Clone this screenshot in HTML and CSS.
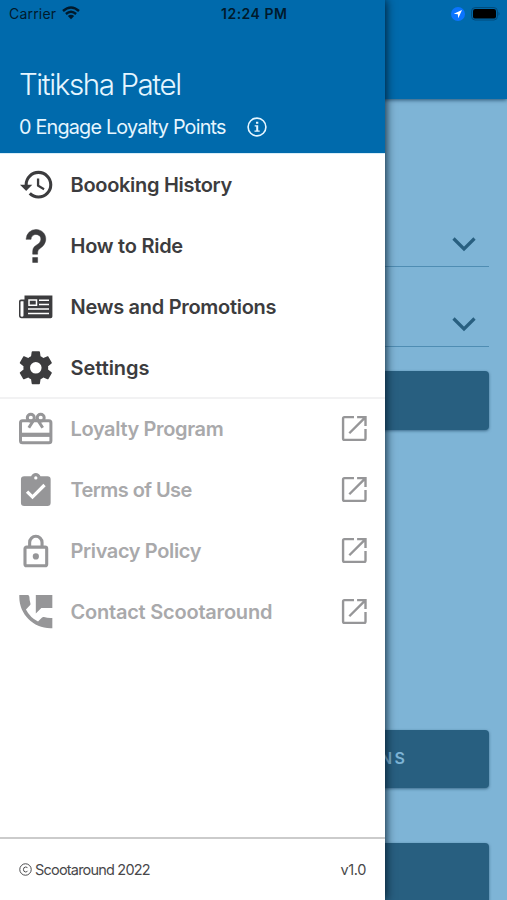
FILE: index.html
```html
<!DOCTYPE html>
<html lang="en">
<head>
<meta charset="utf-8">
<title>Scootaround</title>
<link rel="stylesheet" href="styles.css">
</head>
<body>
<svg width="0" height="0" class="defs">
  <symbol id="open" viewBox="0 0 26 26"><path d="M12.500 2H3.300Q2 2 2 3.300V22.700Q2 24 3.300 24H22.300Q23.600 24 23.600 22.700V13.500M15.500 2H23.600V10.500M23.600 2L8 17.600" fill="none" stroke="currentColor" stroke-width="2.300"/></symbol>
</svg>
<div class="screen">
  <main class="page">
    <div class="topbar"></div>
    <div class="select first"><svg class="chevron" viewBox="0 0 24 15"><path d="M1.500 1.500L12 12L22.500 1.500"/></svg></div>
    <div class="select"><svg class="chevron" viewBox="0 0 24 15"><path d="M1.500 1.500L12 12L22.500 1.500"/></svg></div>
    <div class="button search"></div>
    <div class="button options">NS</div>
    <div class="button last"></div>
  </main>

  <aside class="drawer">
    <header class="profile">
      <div class="name">Titiksha Patel</div>
      <div class="points"><span>0 Engage Loyalty Points</span>
        <svg class="info" viewBox="0 0 20 20"><circle cx="10" cy="10" r="8.900" fill="none" stroke="#e6f6ff" stroke-width="1.600"/><path d="M9 4.700h2.300v2.100H9zM7.700 8.300h3.500v5.200h1.500v1.300H7.500v-1.300h1.700V9.600H7.700z" fill="#e6f6ff"/></svg>
      </div>
    </header>
    <nav class="menu">
      <div class="row"><svg class="icon" viewBox="-1.600 -.8 26 26"><path d="M13 3a9 9 0 0 0-9 9H1l3.890 3.890.07.14L9 12H6c0-3.870 3.130-7 7-7s7 3.130 7 7-3.130 7-7 7c-1.930 0-3.680-.79-4.940-2.060l-1.420 1.420A8.950 8.950 0 0 0 13 21a9 9 0 0 0 0-18zm-1 5v5l4.280 2.540.72-1.210-3.500-2.080V8z"/></svg><span class="label l1">Boooking History</span></div>
      <div class="row"><svg class="icon" viewBox="-.1 -.1 24.240 24.240"><path d="M10 19h3v3h-3zM12 2c5.350.22 7.680 5.620 4.500 9.670-.83 1-2.170 1.660-2.830 2.500C13 15 13 16 13 17h-3c0-1.670 0-3.080.67-4.080.66-1 2-1.590 2.830-2.250C15.920 8.430 15.320 5.260 12 5a3 3 0 0 0-3 3H6a6 6 0 0 1 6-6z" stroke="currentColor" stroke-width=".3"/></svg><span class="label l2">How to Ride</span></div>
      <div class="row"><svg class="icon" viewBox="0 0 40 40"><path fill-rule="evenodd" d="M8.500 8.500H36.400V29.500Q36.400 31.300 34.600 31.300H5.500Q3 31.300 3 28.600V14.500Q3 12.500 5 12.500H8.500zM5 14.200Q4.500 14.200 4.500 15V28.400Q4.500 29.700 6 29.700Q7.500 29.700 7.500 28.400V14.200z"/><path d="M13 12.900h7.500v5.400H13zM23 13.200h10M23 17.500h10M12 22h21M12 26.400h21" fill="none" stroke="#fff" stroke-width="1.500"/></svg><span class="label l3">News and Promotions</span></div>
      <div class="row"><svg class="icon" viewBox="0 0 24.240 24.240"><path d="M12 15.500A3.500 3.500 0 1 1 12 8.500a3.500 3.500 0 0 1 0 7m7.430-2.530c.04-.32.07-.64.07-.97s-.03-.66-.07-1l2.110-1.630c.19-.15.24-.42.120-.64l-2-3.460c-.12-.22-.39-.31-.61-.22l-2.490 1c-.52-.39-1.060-.73-1.690-.98l-.37-2.650A.506.506 0 0 0 14 2h-4c-.25 0-.46.18-.5.42l-.37 2.650c-.63.25-1.170.59-1.690.98l-2.490-1c-.22-.09-.49 0-.61.22l-2 3.460c-.13.22-.07.49.12.64L4.570 11c-.04.34-.07.67-.07 1s.03.650.07.970l-2.110 1.660c-.19.15-.25.42-.12.64l2 3.460c.12.22.39.3.61.22l2.490-1.010c.52.4 1.060.74 1.690.99l.37 2.650c.04.240.25.42.5.42h4c.25 0 .46-.18.5-.42l.37-2.650c.63-.26 1.170-.59 1.690-.99l2.490 1.010c.22.08.49 0 .61-.22l2-3.460c.12-.22.07-.49-.12-.64z"/></svg><span class="label l4">Settings</span></div>
    </nav>
    <nav class="menu links">
      <div class="row"><svg class="icon" viewBox="0 0 40 40"><g fill="none" stroke="currentColor" stroke-width="3"><rect x="4.500" y="11.800" width="30.400" height="22" rx="2"/><circle cx="14.800" cy="8.700" r="3.500"/><circle cx="24.700" cy="8.700" r="3.500"/><path d="M18.800 9.500L12.800 18.800M20.700 9.500L26.700 18.800"/><path d="M4 25.800h31" stroke-width="4.200"/></g></svg><span class="label l5">Loyalty Program</span><svg class="ext"><use href="#open"/></svg></div>
      <div class="row"><svg class="icon" viewBox="0 -.8 24.240 24.240"><path fill-rule="evenodd" d="M19 3h-4.180C14.400 1.840 13.300 1 12 1s-2.400.84-2.820 2H5a2 2 0 0 0-2 2v14a2 2 0 0 0 2 2h14a2 2 0 0 0 2-2V5a2 2 0 0 0-2-2m-7 0a1 1 0 1 1 0 2 1 1 0 0 1 0-2m-2 14l-4-4 1.410-1.410L10 14.170l6.590-6.590L18 9z"/></svg><span class="label l6">Terms of Use</span><svg class="ext"><use href="#open"/></svg></div>
      <div class="row"><svg class="icon" viewBox="-.8 -1.400 25.800 25.800"><path d="M12 17a2 2 0 1 1 0-4 2 2 0 0 1 0 4m6 3V10H6v10zm0-12a2 2 0 0 1 2 2v10a2 2 0 0 1-2 2H6a2 2 0 0 1-2-2V10c0-1.110.9-2 2-2h1V6a5 5 0 0 1 10 0v2zm-6-5a3 3 0 0 0-3 3v2h6V6a3 3 0 0 0-3-3"/></svg><span class="label l7">Privacy Policy</span><svg class="ext"><use href="#open"/></svg></div>
      <div class="row"><svg class="icon" viewBox="1.200 1.300 21.800 21.800"><path d="M20 15.500c-1.250 0-2.450-.2-3.570-.57a1.020 1.020 0 0 0-1.020.24l-2.200 2.200a15.070 15.070 0 0 1-6.590-6.590l2.200-2.200c.28-.28.36-.67.25-1.020A11.360 11.360 0 0 1 8.500 4a1 1 0 0 0-1-1H3v1c0 9.390 7.610 17 17 17h1v-5.500zM12 3v10l3-3h6V3z"/></svg><span class="label l8">Contact Scootaround</span><svg class="ext"><use href="#open"/></svg></div>
    </nav>
    <footer class="footer"><span class="copy"><svg class="cr" viewBox="0 0 12 12"><circle cx="6" cy="6" r="5.300"/><path d="M7.900 4.700Q7.400 3.700 6.100 3.700Q4.100 3.800 4.100 6T6.100 8.300Q7.400 8.300 7.900 7.200"/></svg><span class="ct">Scootaround 2022</span></span><span class="ver">v1.0</span></footer>
  </aside>

  <div class="status">
    <span class="carrier">Carrier</span>
    <svg class="wifi" viewBox="0 0 18 14"><path d="M1 5Q9-2.200 17 5M3.900 8Q9 3.500 14.100 8" fill="none" stroke="#001a2c" stroke-width="2.400"/><path d="M5.800 10Q9 7.300 12.200 10L9 13.300z" fill="#001a2c"/></svg>
    <span class="time">12:24 PM</span>
    <svg class="loc" viewBox="0 0 14 14"><circle cx="7" cy="7" r="7" fill="#0a74ff"/><path d="M11 3L2.800 6.800L6.800 7.300L7.300 11.200z" fill="#fff"/></svg>
    <svg class="battery" viewBox="0 0 29 14"><rect x=".6" y=".6" width="25.800" height="12.400" rx="3.500" fill="none" stroke="#004a7a"/><rect x="2" y="2" width="23" height="9.600" rx="2.200" fill="#000"/><path d="M27.500 4.800Q29.500 6.800 27.500 8.800z" fill="#004a7a"/></svg>
  </div>
</div>
</body>
</html>
```

FILE: styles.css
```css
* { box-sizing: border-box; }
body { margin: 0; font-family: Inter, "Liberation Sans", sans-serif; }
.defs { display: block; position: absolute; }
.screen { position: relative; width: 507px; height: 900px; overflow: hidden; }

.page { height: 900px; background: #7eb4d6; display: flex; flex-direction: column; overflow: hidden; }
.topbar { flex: none; height: 99px; background: #006aac; box-shadow: 0 1px 4px rgba(0, 40, 70, .7); }
.select { flex: none; height: 80px; margin: 0 18px; border-bottom: 1.500px solid #4f8db3; display: flex; justify-content: flex-end; align-items: flex-end; padding: 0 13px 14px 0; }
.select.first { height: 168px; }
.chevron { width: 24px; height: 15px; fill: none; stroke: #285f80; stroke-width: 3.200; }
.button { flex: none; height: 58px; margin: 0 18px; border-radius: 4px; background: #285f80; box-shadow: 0 1px 3px rgba(20, 60, 90, .6); color: #7eb4d6; font-size: 16px; font-weight: 600; letter-spacing: 2.500px; line-height: 57px; text-align: right; padding-right: 81.500px; }
.search { margin-top: 24px; height: 59px; }
.options { margin-top: 300px; }
.last { margin-top: 55px; height: 60px; }

.drawer { position: absolute; left: 0; top: 0; width: 385px; height: 900px; background: #fff; display: flex; flex-direction: column; box-shadow: 1px 0 9px rgba(0, 20, 35, .9); }
.profile { flex: none; height: 154px; background: #006aac; color: #e6f6ff; padding: 64px 0 0 19px; border-bottom: 1px solid #d7edf8; }
.name { font-size: 29.500px; font-weight: 300; line-height: 40px; letter-spacing: -1.400px; white-space: nowrap; }
.points { display: flex; align-items: center; gap: 21px; margin-top: 11px; font-size: 19.800px; line-height: 24px; letter-spacing: -.8px; white-space: nowrap; }
.info { width: 20px; height: 20px; }
.menu { flex: none; height: 244px; color: #3c3c3e; }
.links { color: #969698; border-top: 2px solid #f2f2f3; margin-top: -1px; height: 245px; }
.links .row:first-child { height: 60px; }
.row { height: 61px; display: flex; align-items: center; padding: 0 17px 0 16px; }
.icon { width: 40px; height: 40px; fill: currentColor; }
.label { margin-left: 14.500px; font-size: 20px; font-weight: 600; white-space: nowrap; }
.l1 { letter-spacing: -.3px; }
.l2 { letter-spacing: -.26px; }
.l3 { letter-spacing: -.29px; }
.l4 { letter-spacing: -.04px; }
.l5 { letter-spacing: -.37px; }
.l6 { letter-spacing: -.58px; }
.l7 { letter-spacing: -.38px; }
.l8 { letter-spacing: -.22px; }
.links .label { color: #a9a9ab; }
.ext { width: 27px; height: 27px; margin: 0 0 1px auto; }
.footer { height: 63px; margin-top: auto; border-top: 2px solid #cbcbcb; display: flex; align-items: center; justify-content: space-between; padding: 0 19px 0; font-size: 14.500px; letter-spacing: -.4px; color: #48484a; }
.copy { display: flex; align-items: center; gap: 3px; letter-spacing: -.8px; }
.cr { width: 13px; height: 13px; fill: none; stroke: #48484a; stroke-width: .9; }
.ver { letter-spacing: -.4px; }

.status { position: absolute; inset: 0 0 auto 0; height: 27px; display: flex; align-items: center; color: #001a2c; }
.carrier { margin-left: 9px; width: 48px; font-size: 14px; letter-spacing: .2px; }
.wifi { width: 18px; height: 14px; margin: 0 0 1px 5px; }
.time { margin-left: 141px; width: 68px; font-size: 14px; font-weight: 600; letter-spacing: .5px; white-space: nowrap; }
.loc { width: 14px; height: 14px; margin-left: 162px; }
.battery { width: 29px; height: 14px; margin: 0 0 0 6px; }
```
